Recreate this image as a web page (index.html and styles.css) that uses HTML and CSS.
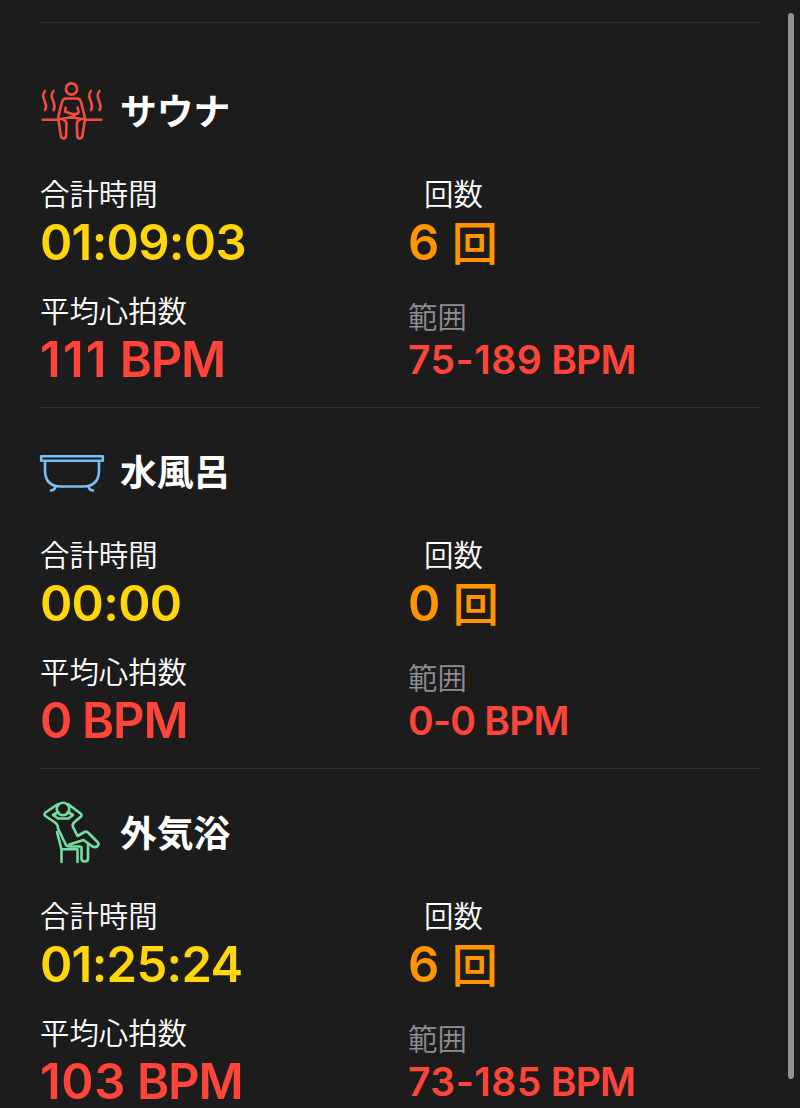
FILE: index.html
```html
<!DOCTYPE html>
<html lang="ja">
<head>
<meta charset="UTF-8" />
<meta name="viewport" content="width=device-width, initial-scale=1" />
<title>サウナ記録</title>
<link rel="stylesheet" href="styles.css">
</head>
<body>

<main class="summary">
  <section class="section sauna">
    <h2 class="title">
      <svg class="icon" viewBox="0 0 64 64">
        <circle cx="31.500" cy="11" r="5.600" />
        <path d="M5 13c-6 7 4.500 12 0 19M13.500 13c-6 7 4.500 12 0 19M51 13c-6 7 4.500 12 0 19M59.500 13c-6 7 4.500 12 0 19" />
        <path d="M2.700 41.700h15.600M45 41.700h16.300" />
        <path d="M25.700 29.500l-.7 4 7 2.500h3q4 0 3.500-3l-1-3.500M18.300 38.500l3.700-14.500q1-3.500 4-3.500h11q3 0 4 3.500l3.700 14.500q0 3-3 2.500l-12-2M18.300 38.500q0 3 3 2.500l11-2 3-2" />
        <path d="M18.300 41l2.500 16.500q.5 3 3 3 2.500-.5 2.300-3.500l.4-11q0-3-3-4M45 41l-2.500 16.500q-.5 3-3 3-2.500-.5-2.300-3.500l-.4-11q0-3 3-4" />
      </svg>
      <span class="name">サウナ</span>
    </h2>
    <div class="stats">
      <div class="stat">
        <div class="label">合計時間</div>
        <div class="value time">01:09:03</div>
      </div>
      <div class="stat">
        <div class="label indent">回数</div>
        <div class="value count">6 <span class="unit">回</span></div>
      </div>
      <div class="stat">
        <div class="label">平均心拍数</div>
        <div class="value bpm"><span class="wider">111</span> BPM</div>
      </div>
      <div class="stat range">
        <div class="label">範囲</div>
        <div class="value bpm"><span class="wide">75-189</span> BPM</div>
      </div>
    </div>
  </section>

  <section class="section bath">
    <h2 class="title">
      <svg class="icon" viewBox="0 0 64 64">
        <path d="M1.200 17.200h61.600v4.600H1.200zM5 22v9q0 16.500 16 16.500h22q16 0 16-16.500v-9M15.500 47q0 4-4.500 4.500M48.500 47q0 4 4.500 4.500" />
      </svg>
      <span class="name">水風呂</span>
    </h2>
    <div class="stats">
      <div class="stat">
        <div class="label">合計時間</div>
        <div class="value time">00:00</div>
      </div>
      <div class="stat">
        <div class="label indent">回数</div>
        <div class="value count">0 <span class="unit">回</span></div>
      </div>
      <div class="stat">
        <div class="label">平均心拍数</div>
        <div class="value bpm">0 BPM</div>
      </div>
      <div class="stat range">
        <div class="label">範囲</div>
        <div class="value bpm">0-0 BPM</div>
      </div>
    </div>
  </section>

  <section class="section rest">
    <h2 class="title">
      <svg class="icon" viewBox="0 0 64 64">
        <circle cx="23" cy="9" r="6.300" />
        <path d="M18 4L5.500 12.500q-2 1.500 0 3.500l9.500 6.500q3 2 3 6l7.500 15.500q1 2.500 4 2.500h10.500" />
        <path d="M28 4l12.500 9.500q2 1.500 0 3.500l-6.500 5.500q-2 2-1 4.500l4.500 9 7-4q2-1 4 1l9 9q2 2 0 4t-5 .5l-9-6.500-14 4.500" />
        <path d="M18.500 12l-5.500 3 5 3.500h10.500l4.500-3.500-5.500-3" />
        <path d="M17 32l4.500 17.300v12.700M21.500 49.300h16v12.700M41.500 47v11.500q0 3 3.200 3 3.300 0 3.300-3V45" />
      </svg>
      <span class="name">外気浴</span>
    </h2>
    <div class="stats">
      <div class="stat">
        <div class="label">合計時間</div>
        <div class="value time">01:25:24</div>
      </div>
      <div class="stat">
        <div class="label indent">回数</div>
        <div class="value count">6 <span class="unit">回</span></div>
      </div>
      <div class="stat">
        <div class="label">平均心拍数</div>
        <div class="value bpm"><span class="wide">103</span> BPM</div>
      </div>
      <div class="stat range">
        <div class="label">範囲</div>
        <div class="value bpm"><span class="wide">73-185</span> BPM</div>
      </div>
    </div>
  </section>
</main>
<div class="scrollbar"></div>

</body>
</html>
```
FILE: styles.css
```css
* {
  box-sizing: border-box;
}
body {
  margin: 0;
  height: 1108px;
  overflow: hidden;
  background: #1c1c1d;
  color: white;
  font-family: Inter, "Noto Sans CJK JP", sans-serif;
}
.summary {
  padding: 22px 40px 0;
}
.section {
  height: 361px;
  border-top: 1px solid #303034;
  padding-top: 31px;
}
.sauna {
  height: 385px;
  padding-top: 55px;
}
.title {
  display: flex;
  align-items: center;
  gap: 16px;
  height: 64px;
  margin: 0;
  font-size: 36.8px;
  font-weight: 700;
}
.name {
  padding-bottom: 3px;
}
.icon {
  width: 64px;
  height: 64px;
  fill: none;
  stroke-width: 2.6;
  stroke-linecap: round;
  stroke-linejoin: round;
  overflow: visible;
}
.sauna .icon {
  stroke: #f24c3d;
}
.bath .icon {
  stroke: #79bdf2;
}
.rest .icon {
  stroke: #72dfa0;
}
.stats {
  display: grid;
  grid-template-columns: 368px 1fr;
  grid-auto-rows: 117px;
  padding-top: 33px;
}
.label {
  height: 40px;
  font-size: 29.4px;
  line-height: 40px;
  font-weight: 350;
}
.indent {
  padding-left: 16px;
}
.value {
  height: 50px;
  margin-top: 3px;
  font-size: 49px;
  line-height: 50px;
  font-weight: 600;
  white-space: nowrap;
}
.time {
  color: #ffd60a;
  letter-spacing: -0.7px;
}
.count {
  color: #ff9500;
}
.unit {
  font-size: 46px;
  font-weight: 500;
}
.bpm {
  color: #ff453a;
  letter-spacing: -1.3px;
}
.wide {
  letter-spacing: 0.6px;
}
.wider {
  letter-spacing: 2.2px;
}
.range {
  padding-top: 6px;
}
.range .label {
  color: #8e8e93;
}
.range .value {
  height: 48px;
  margin-top: -2px;
  font-size: 39px;
  line-height: 48px;
  letter-spacing: -0.8px;
}
.range .wide {
  letter-spacing: 0.5px;
}
.scrollbar {
  position: absolute;
  top: 13px;
  right: 6px;
  width: 6px;
  height: 1066px;
  border-radius: 3px;
  background: #919191;
}
```
